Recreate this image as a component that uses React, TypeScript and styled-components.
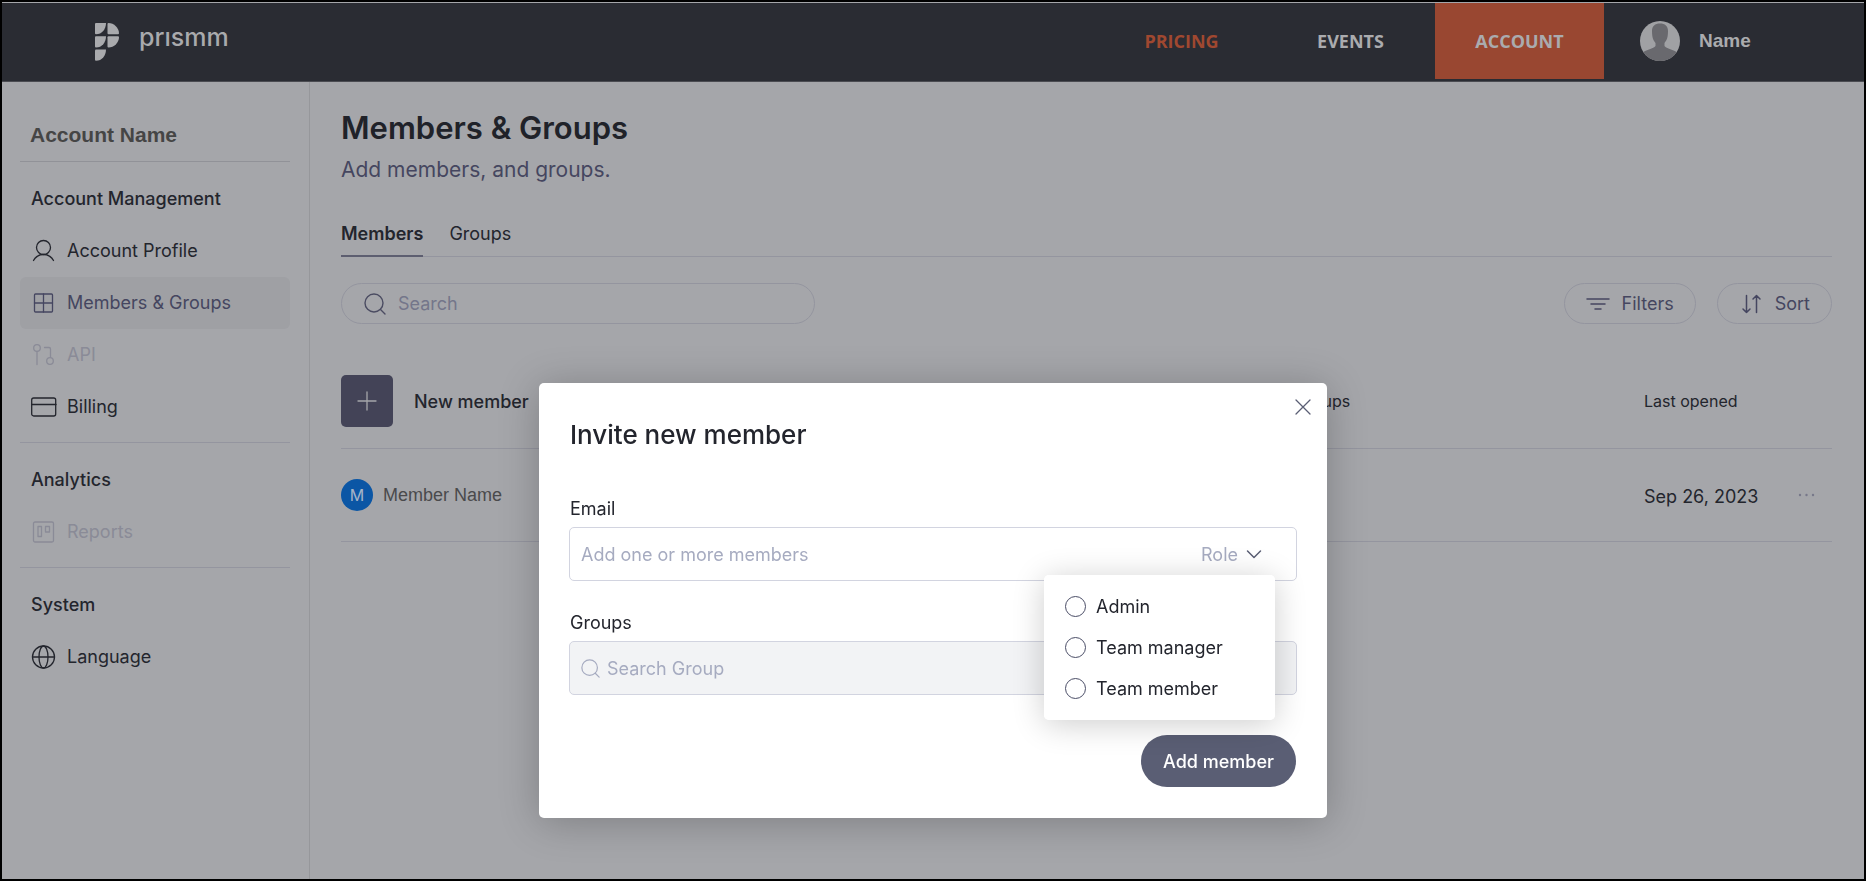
import React from "react";
import styled, { createGlobalStyle } from "styled-components";

const Global = createGlobalStyle`
  *, *::before, *::after { box-sizing: border-box; }
  body { margin: 0; background: #a5a6aa; font-family: Inter, "Liberation Sans", sans-serif; font-size: 18px; color: #23252d; }
  button, input { font: inherit; color: inherit; }
  h1, h2, h3, p { margin: 0; padding: 0; }
  a { color: inherit; text-decoration: none; }
`;

const c = {
  line: "#94959f",
  text: "#23252d",
  soft: "#454660",
  faint: "#8a8b97",
  primary: "#5a5e74",
  placeholder: "#a6abc0",
  field: "#d2d4e0",
};

const Page = styled.div`
  min-height: 100vh;
  display: flex;
  flex-direction: column;
  border: 2px solid #000;
`;

const Header = styled.header`
  height: 80px;
  display: flex;
  justify-content: space-between;
  background: #2a2c33;
  border-top: 1px solid #a5a6aa;
  border-bottom: 1px solid #4b4c52;
`;

const Brand = styled.a`
  display: flex;
  align-items: flex-start;
  gap: 19px;
  padding: 17px 0 0 92px;
  color: #a9aaad;
`;

const Wordmark = styled.span`
  padding-top: 3px;
  font-weight: 500;
  font-size: 25px;
  line-height: 28px;
`;

const Nav = styled.nav`
  display: flex;
`;

const NavLink = styled.a<{ $active?: boolean; $accent?: boolean }>`
  display: flex;
  align-items: center;
  justify-content: center;
  width: 169px;
  height: 76px;
  background: ${(p) => (p.$active ? "#994731" : "transparent")};
  color: ${(p) => (p.$accent ? "#a04830" : "#aaabae")};
  font: 700 18px/24px "Open Sans", sans-serif;
`;

const User = styled.a`
  display: flex;
  align-items: center;
  gap: 19px;
  width: 260px;
  height: 76px;
  padding-left: 36px;
  color: #aaabae;
  font: 700 19px/24px "Liberation Sans", Arial, sans-serif;
`;

const Body = styled.div`
  flex: 1;
  display: flex;
`;

const Sidebar = styled.aside`
  width: 308px;
  flex: none;
  padding: 34px 19px 0 18px;
  border-right: 1px solid #96979b;
`;

const AccountName = styled.h2`
  height: 46px;
  padding: 6px 10px 0;
  border-bottom: 1px solid #919298;
  font: 700 21px/26px "Liberation Sans", Arial, sans-serif;
  color: #454545;
`;

const Section = styled.section`
  padding: 24px 0 9px;
  & + & { border-top: 1px solid ${c.line}; }
`;

const SectionTitle = styled.h3`
  padding: 0 11px;
  margin-bottom: 13px;
  font-weight: 500;
  font-size: 18px;
  line-height: 26px;
`;

const SideLink = styled.a<{ $tone?: "active" | "off" }>`
  display: flex;
  align-items: center;
  gap: 10px;
  height: 52px;
  padding: 0 11px;
  border-radius: 6px;
  line-height: 26px;
  background: ${(p) => (p.$tone === "active" ? "#9fa0a4" : "transparent")};
  color: ${(p) => (p.$tone === "active" ? c.soft : p.$tone === "off" ? c.faint : c.text)};
  svg { flex: none; }
`;

const Main = styled.main`
  flex: 1;
  min-width: 0;
  padding: 26px 32px 0 31px;
`;

const Title = styled.h1`
  font-weight: 600;
  font-size: 31px;
  line-height: 40px;
  color: #202229;
`;

const Subtitle = styled.p`
  margin-top: 8px;
  font-size: 21px;
  line-height: 28px;
  color: ${c.soft};
`;

const Tabs = styled.div`
  display: flex;
  gap: 26px;
  margin-top: 34px;
  border-bottom: 1px solid ${c.line};
`;

const Tab = styled.button<{ $active?: boolean }>`
  height: 39px;
  margin-bottom: -1px;
  padding: 0 0 6px;
  border: 0;
  border-bottom: 2px solid ${(p) => (p.$active ? "#5d5e70" : "transparent")};
  background: none;
  font-weight: ${(p) => (p.$active ? 600 : 400)};
`;

const Toolbar = styled.div`
  display: flex;
  align-items: center;
  gap: 21px;
  margin-top: 26px;
`;

const SearchBox = styled.label`
  display: flex;
  align-items: center;
  gap: 12px;
  width: 474px;
  height: 41px;
  margin-right: auto;
  padding: 0 22px;
  border: 1px solid ${c.line};
  border-radius: 21px;
  color: #4b4c62;
`;

const PlainInput = styled.input<{ $hint: string }>`
  flex: 1;
  min-width: 0;
  padding: 0;
  border: 0;
  outline: 0;
  background: transparent;
  &::placeholder { color: ${(p) => p.$hint}; opacity: 1; }
`;

const PillButton = styled.button`
  display: flex;
  align-items: center;
  gap: 12px;
  height: 41px;
  padding: 0 21px;
  border: 1px solid ${c.line};
  border-radius: 21px;
  background: none;
  color: ${c.soft};
`;

const Table = styled.table`
  width: 100%;
  margin-top: 31px;
  border-collapse: collapse;
  table-layout: fixed;
  th, td { height: 93px; padding: 0; border-bottom: 1px solid ${c.line}; text-align: left; font-weight: 400; }
  th { font-size: 16px; }
`;

const GrowCol = styled.col`
  width: 64%;
`;

const DateCol = styled.col`
  width: 154px;
`;

const MoreCol = styled.col`
  width: 34px;
`;

const NewMember = styled.button`
  display: flex;
  align-items: center;
  gap: 21px;
  padding: 0;
  border: 0;
  background: none;
  font-size: 18px;
  font-weight: 500;
`;

const PlusTile = styled.span`
  display: grid;
  place-items: center;
  width: 52px;
  height: 52px;
  border-radius: 5px;
  background: #434357;
  color: #a5a6aa;
`;

const Person = styled.span`
  display: flex;
  align-items: center;
  gap: 10px;
  font: 400 18px/24px "Liberation Sans", Arial, sans-serif;
  color: #4a4a4c;
`;

const Initial = styled.span`
  display: grid;
  place-items: center;
  width: 32px;
  height: 32px;
  border-radius: 50%;
  background: #0b56a5;
  color: #a5b4c8;
  font: 400 16px/32px Inter, sans-serif;
`;

const Opened = styled.span`
  display: block;
  padding-top: 4px;
`;

const IconButton = styled.button`
  display: flex;
  padding: 0;
  border: 0;
  background: none;
  color: ${c.primary};
`;

const Overlay = styled.div`
  position: fixed;
  inset: 0;
  display: flex;
  justify-content: center;
  align-items: flex-start;
  padding-top: 383px;
`;

const Dialog = styled.form`
  position: relative;
  width: 788px;
  padding: 36px 30px 31px;
  border-radius: 5px;
  background: #fff;
  box-shadow: 0 4px 40px rgba(0, 0, 0, 0.24);
`;

const Close = styled(IconButton)`
  position: absolute;
  top: 16px;
  right: 16px;
`;

const DialogTitle = styled.h2`
  padding-left: 1px;
  margin-bottom: 45px;
  font-weight: 500;
  font-size: 26px;
  line-height: 32px;
`;

const Field = styled.div`
  margin-bottom: 29px;
`;

const FieldLabel = styled.label`
  display: block;
  padding-left: 1px;
  margin-bottom: 5px;
  font-size: 18px;
  line-height: 26px;
`;

const FieldBox = styled.div<{ $filled?: boolean }>`
  position: relative;
  display: flex;
  align-items: center;
  gap: 7px;
  height: 54px;
  padding: 0 34px 0 11px;
  border: 1px solid ${c.field};
  border-radius: 5px;
  background: ${(p) => (p.$filled ? "#f2f3f5" : "#fff")};
  color: ${c.placeholder};
`;

const RoleButton = styled.button`
  display: flex;
  align-items: center;
  gap: 8px;
  padding: 0;
  border: 0;
  background: none;
  svg { color: ${c.primary}; }
`;

const Menu = styled.fieldset`
  position: absolute;
  z-index: 1;
  top: 47px;
  right: 21px;
  width: 231px;
  margin: 0;
  padding: 11px 21px;
  border: 0;
  border-radius: 5px;
  background: #fff;
  box-shadow: 0 4px 32px rgba(0, 0, 0, 0.2);
  color: ${c.text};
`;

const Option = styled.label`
  display: flex;
  align-items: center;
  gap: 10px;
  height: 41px;
`;

const Radio = styled.input`
  appearance: none;
  width: 21px;
  height: 21px;
  margin: 0;
  border: 1px solid #4a4d66;
  border-radius: 50%;
  &:checked { background: ${c.primary}; }
`;

const Actions = styled.div`
  display: flex;
  justify-content: flex-end;
  padding: 11px 1px 0 0;
`;

const Submit = styled.button`
  height: 52px;
  padding: 0 22px;
  border: 0;
  border-radius: 26px;
  background: ${c.primary};
  color: #fff;
  font-weight: 500;
`;

type IconProps = { w: number; h?: number; children: React.ReactNode; sw?: number };
const Icon = ({ w, h = w, sw = 1.3, children }: IconProps) => (
  <svg width={w} height={h} viewBox={`0 0 ${w} ${h}`} fill="none" stroke="currentColor" strokeWidth={sw} strokeLinecap="round" strokeLinejoin="round" aria-hidden="true">
    {children}
  </svg>
);

const Logo = () => (
  <svg width="26" height="42" viewBox="0 0 26 42" fill="currentColor" aria-hidden="true">
    <path d="M2 3h10c0 6-4 11.300-10 11.300q-1 0-1-1V4q0-1 1-1z" />
    <path d="M14.500 3c5.500 0 10.500 5 10.500 10.300q0 1-1 1H14.500q-1 0-1-1V4q0-1 1-1z" />
    <path d="M2 16.200h10c0 6-4 11.300-10 11.300q-1 0-1-1v-9.300q0-1 1-1z" />
    <path d="M14.500 16.200H24q1 0 1 1c0 5.300-5 10.300-10.500 10.300q-1 0-1-1v-9.300q0-1 1-1z" />
    <path d="M2 29.500h10c0 6-4 11.300-10 11.300q-1 0-1-1v-9.300q0-1 1-1z" />
  </svg>
);

const Avatar = () => (
  <svg width="40" height="40" viewBox="0 0 40 40" aria-hidden="true">
    <defs>
      <clipPath id="avatar-clip"><circle cx="20" cy="20" r="20" /></clipPath>
    </defs>
    <g clipPath="url(#avatar-clip)">
      <rect width="40" height="40" fill="#a0a1a4" />
      <path d="M12 10c0-5 3-7.500 8-7.500s8 2.500 8 7.500c0 6-1 9-3.500 12v3c2 3 9 3.500 13.500 7v10H2V32c4.500-3.500 11.500-4 13.500-7v-3C13 19 12 16 12 10z" fill="#69696e" />
    </g>
  </svg>
);

const SearchIcon = ({ size }: { size: number }) => (
  <svg width={size} height={size} viewBox="0 0 22 22" fill="none" stroke="currentColor" strokeWidth="1.400" strokeLinecap="round" aria-hidden="true">
    <circle cx="10" cy="10" r="9" />
    <path d="m16.500 16.500 4.500 4.500" />
  </svg>
);

const icons = {
  profile: <Icon w={26}><circle cx="12.500" cy="9.500" r="7" /><path d="M2.500 22.500c2-3.800 5.500-6 10-6s8 2.200 10 6" /></Icon>,
  members: <Icon w={26}><rect x="3.500" y="4" width="18" height="18" rx="1" /><path d="M12.500 4v18M3.500 13h18" /></Icon>,
  api: <Icon w={26}><circle cx="6" cy="6" r="3.300" /><path d="M6 9.500v13M13.500 5.500H18q1.500 0 1.500 1.500v8" /><circle cx="19" cy="19" r="3.300" /></Icon>,
  billing: <Icon w={26}><rect x="0.700" y="4" width="24" height="18" rx="2" /><path d="M1 10.500h24" /></Icon>,
  reports: <Icon w={26}><rect x="2.500" y="3" width="20" height="20" rx="1.500" /><path d="M7 7.500h3.500v10H7zM14.500 7.500h4v5.500h-4z" /></Icon>,
  language: <Icon w={26}><circle cx="12.500" cy="13" r="11" /><ellipse cx="12.500" cy="13" rx="4.500" ry="11" /><path d="M1.500 13h22" /></Icon>,
};

export default function App() {
  return (
    <>
      <Global />
      <Page>
        <Header>
          <Brand href="#" aria-label="prismm home"><Logo /><Wordmark>prısmm</Wordmark></Brand>
          <Nav>
            <NavLink href="#" $accent>PRICING</NavLink>
            <NavLink href="#">EVENTS</NavLink>
            <NavLink href="#" $active>ACCOUNT</NavLink>
            <User href="#"><Avatar />Name</User>
          </Nav>
        </Header>
        <Body>
          <Sidebar>
            <AccountName>Account Name</AccountName>
            <Section>
              <SectionTitle>Account Management</SectionTitle>
              <SideLink href="#">{icons.profile}Account Profile</SideLink>
              <SideLink href="#" $tone="active">{icons.members}Members &amp; Groups</SideLink>
              <SideLink href="#" $tone="off">{icons.api}API</SideLink>
              <SideLink href="#">{icons.billing}Billing</SideLink>
            </Section>
            <Section>
              <SectionTitle>Analytics</SectionTitle>
              <SideLink href="#" $tone="off">{icons.reports}Reports</SideLink>
            </Section>
            <Section>
              <SectionTitle>System</SectionTitle>
              <SideLink href="#">{icons.language}Language</SideLink>
            </Section>
          </Sidebar>
          <Main>
            <Title>Members &amp; Groups</Title>
            <Subtitle>Add members, and groups.</Subtitle>
            <Tabs role="tablist">
              <Tab role="tab" aria-selected="true" $active>Members</Tab>
              <Tab role="tab" aria-selected="false">Groups</Tab>
            </Tabs>
            <Toolbar>
              <SearchBox>
                <SearchIcon size={22} />
                <PlainInput $hint="#74768a" placeholder="Search" aria-label="Search members" />
              </SearchBox>
              <PillButton>
                <Icon w={24} h={16} sw={1.5}><path d="M1 3h22M5 8h14M9 13h6" /></Icon>
                Filters
              </PillButton>
              <PillButton>
                <Icon w={24} h={20} sw={1.5}><path d="M7.500 1.500v17M4 15 7.500 18.500 11 15M17.500 18.500v-17M14 5l3.500-3.500L21 5" /></Icon>
                Sort
              </PillButton>
            </Toolbar>
            <Table>
              <colgroup><GrowCol /><col /><DateCol /><MoreCol /></colgroup>
              <thead>
                <tr>
                  <th><NewMember><PlusTile><Icon w={20}><path d="M10 1v18M1 10h18" /></Icon></PlusTile>New member</NewMember></th>
                  <th>Groups</th>
                  <th>Last opened</th>
                  <th aria-label="Actions" />
                </tr>
              </thead>
              <tbody>
                <tr>
                  <td><Person><Initial>M</Initial>Member Name</Person></td>
                  <td />
                  <td><Opened>Sep 26, 2023</Opened></td>
                  <td><IconButton aria-label="More"><svg width="18" height="4" viewBox="0 0 18 4" fill="#77788a"><circle cx="2" cy="2" r="1.200" /><circle cx="8.500" cy="2" r="1.200" /><circle cx="15" cy="2" r="1.200" /></svg></IconButton></td>
                </tr>
              </tbody>
            </Table>
          </Main>
        </Body>
      </Page>
      <Overlay>
        <Dialog role="dialog" aria-labelledby="invite-title" onSubmit={(e) => e.preventDefault()}>
          <Close type="button" aria-label="Close"><Icon w={16}><path d="m1 1 14 14M15 1 1 15" /></Icon></Close>
          <DialogTitle id="invite-title">Invite new member</DialogTitle>
          <Field>
            <FieldLabel htmlFor="email">Email</FieldLabel>
            <FieldBox>
              <PlainInput id="email" $hint={c.placeholder} placeholder="Add one or more members" />
              <RoleButton type="button" aria-expanded="true">Role<Icon w={16} h={10} sw={1.5}><path d="m1.500 2 6.500 6.500L14.500 2" /></Icon></RoleButton>
              <Menu aria-label="Role">
                {["Admin", "Team manager", "Team member"].map((role) => (
                  <Option key={role}><Radio type="radio" name="role" value={role} />{role}</Option>
                ))}
              </Menu>
            </FieldBox>
          </Field>
          <Field>
            <FieldLabel htmlFor="groups">Groups</FieldLabel>
            <FieldBox $filled>
              <SearchIcon size={19} />
              <PlainInput id="groups" $hint={c.placeholder} placeholder="Search Group" />
            </FieldBox>
          </Field>
          <Actions><Submit>Add member</Submit></Actions>
        </Dialog>
      </Overlay>
    </>
  );
}
